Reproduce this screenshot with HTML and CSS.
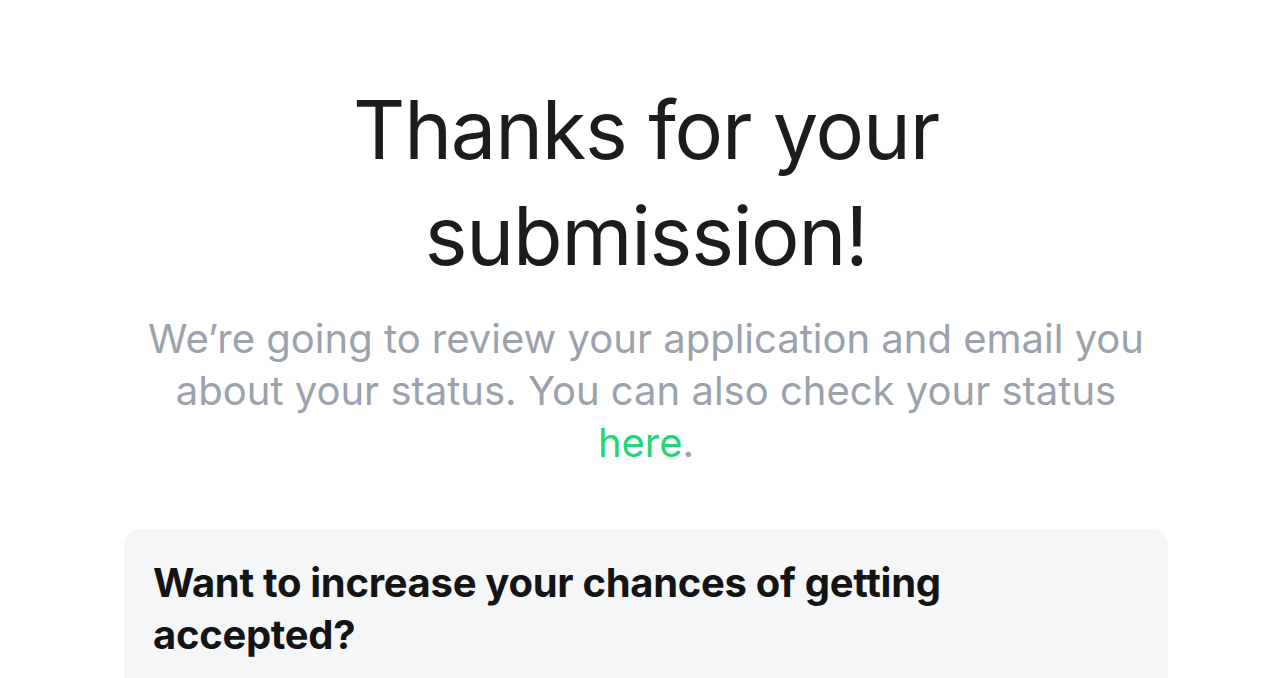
FILE: index.html
```html
<!DOCTYPE html>
<html lang="en">
<head>
<meta charset="utf-8">
<title>Thanks for your submission</title>
<link rel="stylesheet" href="styles.css">
</head>
<body>
<main class="page">
  <section class="thanks">
    <h1 class="thanks-title">Thanks for your<br>submission!</h1>
    <p class="thanks-text">We’re going to review your application and email you about your status. You can also check your status <a class="thanks-link" href="#">here</a>.</p>
  </section>
  <section class="card">
    <h2 class="card-title">Want to increase your chances of getting<br>accepted?</h2>
  </section>
</main>
</body>
</html>
```
FILE: styles.css
```css
html, body {
  margin: 0;
  padding: 0;
  background: #ffffff;
}
body {
  font-family: Inter, "Noto Sans", sans-serif;
  color: #1a1a1a;
  padding-left: 12px;
}
.page {
  width: 1044px;
  margin: 0 auto;
  padding-top: 77px;
}
.thanks {
  text-align: center;
}
.thanks-title {
  margin: 0;
  font-weight: 400;
  font-size: 81px;
  line-height: 106px;
  letter-spacing: -1.2px;
  color: #1c1c1c;
}
.thanks-text {
  max-width: 1010px;
  margin: 24px auto 0;
  font-size: 40px;
  line-height: 52px;
  color: #9ca2ab;
  letter-spacing: 0;
}
.thanks-link {
  color: #1fd776;
  text-decoration: none;
}
.card {
  margin-top: 60px;
  background: #f5f6f7;
  border-radius: 16px;
  padding: 28px 29px 60px;
}
.card-title {
  margin: 0;
  font-size: 40px;
  line-height: 52px;
  font-weight: 700;
  letter-spacing: -0.3px;
  color: #141414;
}
```
